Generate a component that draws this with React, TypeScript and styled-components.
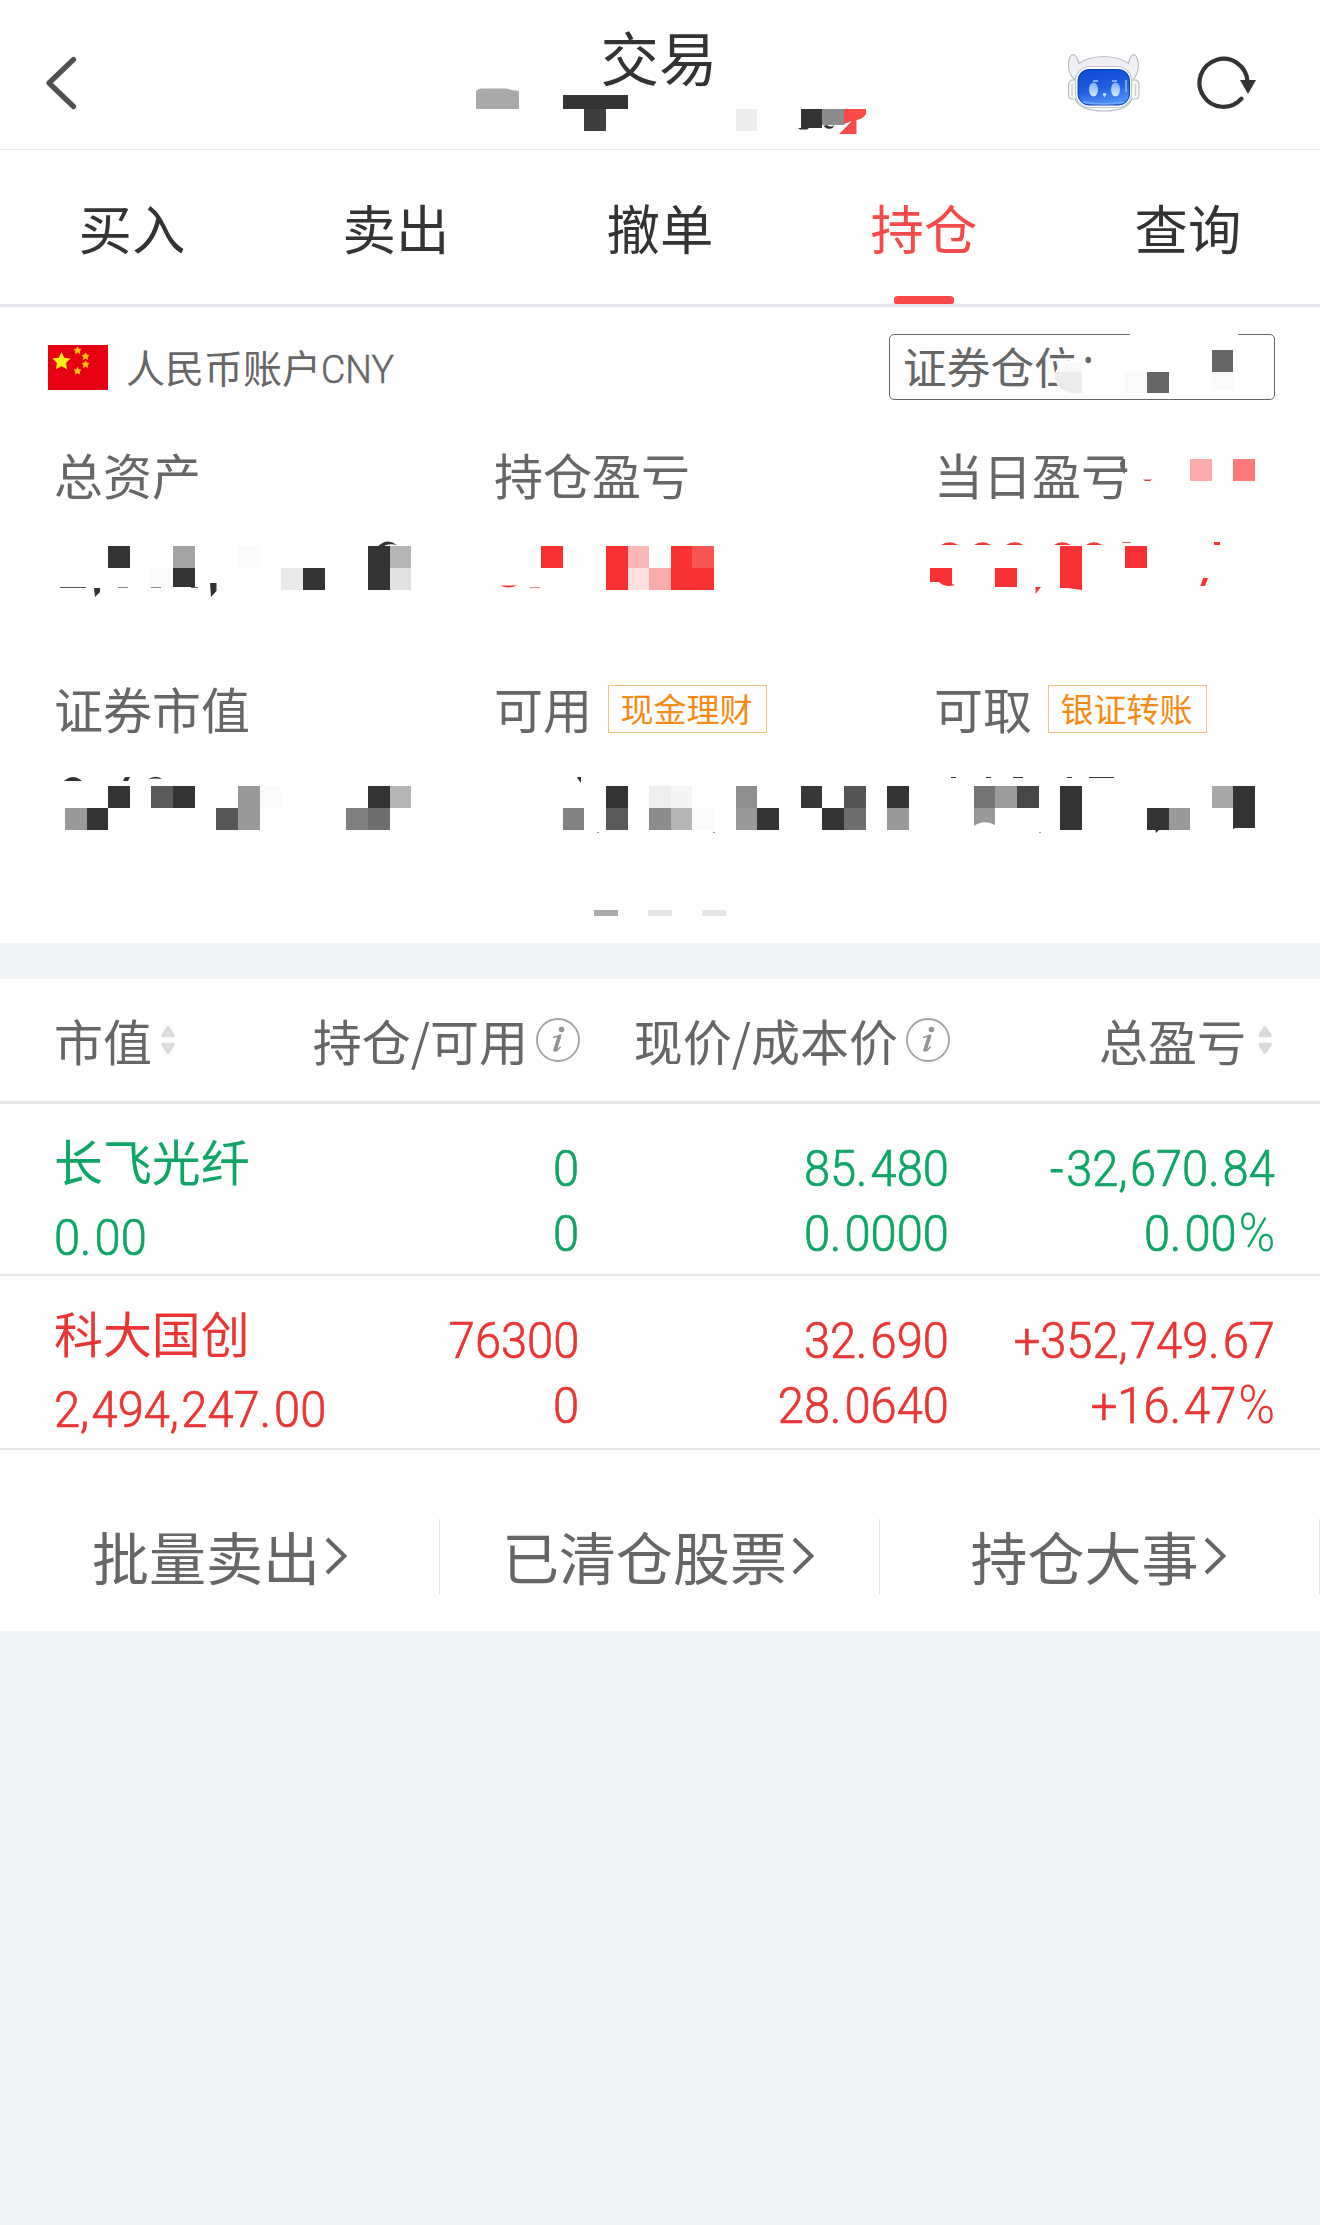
import React from "react";
import styled, { createGlobalStyle } from "styled-components";

const GlobalStyle = createGlobalStyle`
  * { box-sizing: border-box; }
  html, body { margin: 0; background: #f3f4f8; }
`;

const Page = styled.main`
  position: relative;
  width: 1320px;
  min-height: 2225px;
  background: #f3f4f8;
  color: #666;
  font-family: "Noto Sans CJK SC", sans-serif;
  white-space: nowrap;
  overflow: hidden;
`;

/* ---------- top bar ---------- */

const TopBar = styled.header`
  display: grid;
  grid-template-columns: 1fr auto 1fr;
  height: 150px;
  padding: 0 64px 0 45px;
  background: #fefefe;
  border-bottom: 1px solid #e7e7e9;
`;

const Title = styled.h1`
  margin: 0;
  padding: 16px 0 0 17px;
  font-size: 58.5px;
  line-height: 80px;
  font-weight: 400;
  color: #333;
`;

const BackIcon = styled.svg`
  margin-top: 56px;
`;

const Actions = styled.div`
  display: flex;
  justify-content: flex-end;
  align-items: flex-start;
  gap: 56px;
  padding-top: 53px;
`;

/* ---------- tabs ---------- */

const Tabs = styled.nav`
  display: grid;
  grid-template-columns: repeat(5, 1fr);
  height: 157px;
  background: #fefefe;
  border-bottom: 3px solid #e6e7ee;
`;

const Tab = styled.button<{ $active?: boolean }>`
  display: flex;
  flex-direction: column;
  align-items: center;
  justify-content: space-between;
  height: 154px;
  padding: 37px 0 0;
  border: 0;
  background: none;
  font: 400 53.4px/80px "Noto Sans CJK SC", sans-serif;
  color: ${(p) => (p.$active ? "#f64a48" : "#333")};
  &::after {
    content: "";
    width: 60px;
    height: 8px;
    border-radius: 4px 4px 2px 2px;
    background: ${(p) => (p.$active ? "#f84848" : "transparent")};
  }
`;

/* ---------- account summary ---------- */

const Summary = styled.section`
  display: flex;
  flex-direction: column;
  height: 636px;
  background: #fefefe;
`;

const AccountRow = styled.div`
  display: flex;
  justify-content: space-between;
  height: 121px;
  padding: 27px 45px 0 48px;
`;

const Account = styled.div`
  display: flex;
  gap: 18px;
  padding-top: 11px;
  font-size: 39px;
  line-height: 43px;
`;

const Currency = styled.span`
  display: inline-block;
  font-family: Roboto, sans-serif;
  font-size: 38px;
  font-weight: 300;
  -webkit-text-stroke: 0.5px currentColor;
  transform: scaleX(0.985);
  transform-origin: left;
`;

const Position = styled.div`
  width: 386px;
  height: 66px;
  padding-left: 13px;
  border: 1.4px solid #666;
  border-radius: 5px;
  font-size: 43.7px;
  line-height: 61px;
`;

const Metrics = styled.div`
  display: grid;
  grid-template-columns: repeat(3, 440px);
  grid-auto-rows: 234px;
  height: 469px;
`;

const Metric = styled.div`
  display: flex;
  align-items: center;
  gap: 16px;
  height: 80px;
  margin-top: 6px;
  padding-left: 54px;
  font-size: 49px;
  line-height: 80px;
`;

const Tag = styled.span`
  display: flex;
  align-items: center;
  justify-content: center;
  width: 159px;
  height: 48px;
  margin-top: 2px;
  border: 1.4px solid #ecc182;
  color: #f58a16;
  font-size: 33px;
  line-height: 44px;
  padding: 0 2px 2px 0;
`;

const Pager = styled.div`
  display: flex;
  justify-content: center;
  gap: 30px;
  margin-top: 13px;
`;

const Dash = styled.i<{ $on?: boolean }>`
  width: 24px;
  height: 6px;
  background: ${(p) => (p.$on ? "#ababab" : "#e5e5e5")};
`;

/* ---------- holdings ---------- */

const Holdings = styled.section`
  margin-top: 36px;
  background: #fefefe;
`;

const columns = "270px 256px 370px 1fr";

const HeadRow = styled.div`
  display: grid;
  grid-template-columns: ${columns};
  align-items: start;
  height: 125px;
  padding: 22px 48px 0 54px;
  border-bottom: 3px solid #e6e6eb;
  font-size: 49px;
  line-height: 78px;
`;

const HeadCell = styled.div<{ $end?: boolean; $gap: number }>`
  display: flex;
  align-items: center;
  justify-content: ${(p) => (p.$end ? "flex-end" : "flex-start")};
  gap: ${(p) => p.$gap}px;
  height: 78px;
  & > svg { flex: none; }
`;

const StockRow = styled.div<{ $color: string; $h: number }>`
  display: grid;
  grid-template-columns: ${columns};
  height: ${(p) => p.$h}px;
  padding: 0 46px 0 54px;
  border-bottom: 2px solid #e6e6eb;
  color: ${(p) => p.$color};
`;

const NameCell = styled.div`
  padding-top: 16px;
`;

const StockName = styled.div`
  font-size: 48.9px;
  line-height: 80px;
`;

const MarketValue = styled.div`
  height: 65px;
  margin-top: 5px;
`;

const NumCell = styled.div<{ $shift: number }>`
  display: flex;
  flex-direction: column;
  align-items: flex-end;
  padding-top: 32px;
  margin-right: ${(p) => p.$shift}px;
`;

const Figure = styled.span<{ $left?: boolean }>`
  display: inline-block;
  font: 300 50.6px/65px Roboto, sans-serif;
  -webkit-text-stroke: 0.7px currentColor;
  transform: scaleX(0.93);
  transform-origin: ${(p) => (p.$left ? "left" : "right")} center;
`;

const Glyph = styled.span<{ $extra: number; $light?: boolean }>`
  letter-spacing: ${(p) => p.$extra}px;
  font-size: ${(p) => (p.$light ? "1.06em" : "inherit")};
  -webkit-text-stroke: ${(p) => (p.$light ? 0 : 0.9)}px currentColor;
  line-height: 0;
  margin-left: ${(p) => (p.$light ? 2 : 0)}px;
`;

/* ---------- shortcuts ---------- */

const Shortcuts = styled.div`
  display: grid;
  grid-template-columns: repeat(3, 440px);
  height: 181px;
  padding-top: 69px;
`;

const Shortcut = styled.button<{ $nudge: number }>`
  display: flex;
  align-items: center;
  justify-content: center;
  gap: 5px;
  height: 75px;
  padding: 0 ${(p) => p.$nudge}px 2px 0;
  border: 0;
  border-right: 1px solid #e4e4e8;
  background: none;
  color: #666;
  font: 400 57px/73px "Noto Sans CJK SC", sans-serif;
`;

/* ---------- mosaic over private figures ---------- */

const Mosaic = styled.svg`
  position: absolute;
  left: 0;
  top: 0;
  pointer-events: none;
`;

const punctuation: Record<string, number> = { ".": 3.4, ",": 2.6, "-": 3 };

function Num({ value, left }: { value: string; left?: boolean }) {
  return (
    <Figure $left={left}>
      {value.split(/([.,\-%])/).filter(Boolean).map((part, i) =>
        part === "%" || part in punctuation ? (
          <Glyph key={i} $extra={punctuation[part] ?? 0} $light={part === "%"}>{part}</Glyph>
        ) : (
          part
        )
      )}
    </Figure>
  );
}

function Robot() {
  return (
    <svg width="74" height="60" viewBox="1066 53 74 60">
      <defs>
        <linearGradient id="shell" x1="0" y1="0" x2="0" y2="1">
          <stop offset="0" stopColor="#eceef2" />
          <stop offset="1" stopColor="#fafbfd" />
        </linearGradient>
        <linearGradient id="face" x1="0" y1="0" x2="0.3" y2="1">
          <stop offset="0" stopColor="#0b49cf" />
          <stop offset="0.6" stopColor="#1f5ce2" />
          <stop offset="1" stopColor="#4a8cf4" />
        </linearGradient>
        <linearGradient id="eye" x1="0" y1="0" x2="0" y2="1">
          <stop offset="0" stopColor="#7fb0f2" />
          <stop offset="1" stopColor="#d5e9fd" />
        </linearGradient>
      </defs>
      <path d="M1079 63.500Q1087 57 1104 56.500Q1120 57 1128.500 63.500Q1130 55 1134 54.500Q1138 56 1138.500 66Q1138 74 1133 80H1136Q1139 81 1139 86V94Q1139 99 1136 99H1132Q1127 111 1104 111Q1080 111 1075 99H1072Q1068.500 99 1068.500 94V86Q1068.500 80 1072 80H1075Q1068 74 1068.500 64Q1069 55 1073 54.500Q1077 55 1079 63.500Z" fill="url(#shell)" stroke="#b9bac0" strokeWidth="1.100" />
      <rect x="1075.500" y="66.500" width="56" height="41" rx="14" fill="#fff" stroke="#c3c9d8" strokeWidth="1.200" />
      <rect x="1078" y="69.500" width="51.500" height="35.500" rx="11" fill="url(#face)" stroke="#0a3cb4" strokeWidth="1" />
      <path d="M1083 102Q1104 106 1124 102" fill="none" stroke="#70aaf8" strokeWidth="1.500" />
      <ellipse cx="1093.500" cy="89.500" rx="4.500" ry="7" fill="url(#eye)" />
      <ellipse cx="1115.500" cy="89.500" rx="4.500" ry="7" fill="url(#eye)" />
      <path d="M1093 81L1098 81M1112 81L1117 81" stroke="#a8cbf8" strokeWidth="1.500" />
      <path d="M1102.500 94Q1104.500 92 1106.500 94L1104.500 97.500Z" fill="#bcd9fb" />
      <path d="M1126 80V92" stroke="#7fa8f0" strokeWidth="2" />
      <path d="M1072 84V96M1135.500 84V96" stroke="#dec4c4" strokeWidth="1.200" />
    </svg>
  );
}

function Refresh() {
  return (
    <svg width="60" height="60" viewBox="1196 53 60 60">
      <path d="M1241.500 98.700A24 24 0 1 1 1247.500 82" fill="none" stroke="#333" strokeWidth="4.200" strokeLinecap="round" />
      <path d="M1240 80H1256L1248 94Z" fill="#333" />
    </svg>
  );
}

const starPoints = (cx: number, cy: number, r: number) =>
  Array.from({ length: 10 }, (_, i) => {
    const a = (Math.PI / 5) * i - Math.PI / 2;
    const d = i % 2 ? r * 0.5 : r;
    return `${cx + Math.cos(a) * d},${cy + Math.sin(a) * d}`;
  }).join(" ");

function Flag() {
  return (
    <svg width="60" height="45" viewBox="0 0 60 45">
      <rect width="60" height="45" fill="#e60012" />
      <polygon points={starPoints(13.5, 16.5, 9.5)} fill="#ffee10" />
      {[[29.5, 5.5], [37.5, 11.5], [37.5, 19.5], [29.5, 26]].map(([x, y]) => (
        <polygon key={`${x}-${y}`} points={starPoints(x, y, 3.6)} fill="#fcc80c" stroke="#fcc80c" strokeWidth="0.8" />
      ))}
    </svg>
  );
}

function Sort() {
  return (
    <svg width="14" height="28" viewBox="0 0 14 28">
      <path d="M7 2L12 9.500H2ZM7 26L12 18.500H2Z" fill="#dadada" stroke="#dadada" strokeWidth="3.400" strokeLinejoin="round" />
    </svg>
  );
}

function Info() {
  return (
    <svg width="44" height="44" viewBox="0 0 44 44">
      <circle cx="22" cy="22" r="21" fill="none" stroke="#a3a3a3" strokeWidth="1.800" />
      <circle cx="25.500" cy="11.500" r="2.800" fill="#949494" />
      <path d="M17 19.500L24.500 17.500L20.200 31.500Q19.900 33 21.300 32.200L24.600 28.500" fill="none" stroke="#949494" strokeWidth="1.600" />
      <path d="M23.300 18.500L19 32" stroke="#949494" strokeWidth="3.600" strokeLinecap="round" />
    </svg>
  );
}

function Chevron() {
  return (
    <svg width="22" height="38" viewBox="0 0 22 38">
      <path d="M2 2L19.500 19L2 36" fill="none" stroke="#666" strokeWidth="4" />
    </svg>
  );
}

type Block = [number, number, number, number, string];

const D = "#333";
const R = "#f83232";

/* x1, y1, x2, y2, colour */
const blocks: Block[] = [
  [563, 95, 628, 109, D], [584, 109, 606, 131, "#3f3f3f"], [736, 109, 757, 131, "#ededed"],
  [801, 109, 822, 128, D], [822, 109, 844, 125, "#8c8c8c"],
  [1125, 372, 1147, 393, "#f9f9f9"], [1147, 372, 1169, 393, "#666"],
  [1212, 350, 1233, 372, "#666"], [1212, 372, 1233, 391, "#f9f9f9"],
  [108, 546, 130, 568, D], [173, 546, 195, 568, "#a3a3a3"], [151, 568, 173, 587, "#fafafa"],
  [173, 568, 195, 587, D], [238, 546, 260, 568, "#fafafa"], [281, 568, 303, 590, "#e9e9e9"],
  [303, 568, 325, 590, D], [368, 546, 390, 590, D], [390, 546, 411, 568, "#b5b5b5"],
  [390, 568, 411, 590, "#e1e1e1"],
  [60, 587, 86, 588, "#555"], [118, 587, 128, 588, "#888"], [151, 587, 161, 588, "#888"], [191, 587, 198, 588, "#666"],
  [541, 546, 563, 568, R], [606, 546, 628, 590, R], [628, 546, 649, 568, "#fcb6b6"],
  [628, 568, 649, 590, "#fde0e0"], [649, 568, 671, 590, "#fcabab"], [671, 546, 692, 590, R],
  [692, 546, 714, 568, "#fa5555"], [692, 568, 714, 590, R], [530, 587, 540, 588, "#d88"],
  [1190, 459, 1212, 481, "#fcabab"], [1233, 459, 1255, 481, "#fa7a7a"],
  [995, 568, 1017, 587, R], [1060, 546, 1082, 588, R], [1125, 546, 1147, 568, R],
  [1214, 542, 1220, 545, R], [1122, 542, 1131, 543, "#d66"],
  [108, 786, 130, 808, D], [65, 808, 87, 830, "#999"], [87, 808, 108, 830, D],
  [151, 786, 173, 808, "#595959"], [173, 786, 195, 808, D], [238, 786, 260, 830, "#999"],
  [260, 786, 281, 808, "#fafafa"], [216, 808, 238, 830, "#575757"], [368, 786, 390, 808, D],
  [390, 786, 411, 808, "#b5b5b5"], [346, 808, 368, 830, "#808080"], [368, 808, 390, 830, "#6e6e6e"],
  [563, 808, 584, 830, "#828282"], [606, 786, 628, 808, D], [606, 808, 628, 830, "#595959"],
  [649, 786, 671, 808, "#eeeeee"], [671, 786, 692, 808, "#f5f5f5"], [649, 808, 671, 830, "#8c8c8c"],
  [671, 808, 692, 830, "#b5b5b5"], [692, 808, 714, 830, "#fafafa"], [736, 786, 757, 808, "#8f8f8f"],
  [736, 808, 757, 830, "#999"], [757, 808, 779, 830, D], [801, 786, 822, 808, "#373737"],
  [822, 808, 844, 830, D], [844, 786, 866, 808, "#555"], [844, 808, 866, 830, "#6e6e6e"],
  [597, 832, 599, 833, "#999"], [713, 832, 715, 833, "#999"],
  [887, 786, 909, 808, D], [887, 808, 909, 830, "#999"], [974, 786, 995, 808, "#737373"],
  [995, 786, 1017, 808, "#9c9c9c"], [1017, 786, 1039, 808, "#474747"], [1060, 786, 1082, 830, D],
  [1147, 808, 1169, 830, D], [1169, 808, 1190, 830, "#999"], [1212, 786, 1233, 808, "#a8a8a8"],
  [1233, 786, 1255, 828, D], [1039, 832, 1041, 833, "#999"],
  [951, 777, 956, 778, D], [986, 777, 991, 778, D], [1013, 777, 1023, 778, D],
  [1067, 777, 1072, 778, D], [1089, 777, 1114, 778, D],
];

/* leftover curved slivers: path, colour */
const slivers: [string, string][] = [
  ["M476 109V91Q478 88 482 88.500H503Q508 88 511 90L519 91V109Z", "#a9a9a9"],
  ["M844 109H866V114Q863 119 856.500 120V134H839L852 121L844 124Z", "#f84a48"],
  ["M798 128H809L807 129.500H800ZM823 126L827 128.500Q833 130 834 125Q831 128 827 125Z", D],
  ["M1130 333H1238V336H1130Z", "#fefefe"],
  ["M1082 361H1100V393H1066Q1056 390 1055 376Q1055 366 1066 361Z", "#fefefe"],
  ["M1082 363V372H1056Q1060 364 1067 363Z", "#f9f9f9"],
  ["M1082 372V393H1072Q1056 390 1055 376V372Z", "#ececec"],
  ["M1085.500 360A2.800 2.800 0 1 1 1091 360A2.800 2.800 0 1 1 1085.500 360Z", "#666"],
  ["M1120 463L1122 459H1125V474Q1120 471 1120 463Z", "#666"],
  ["M377 547Q387 537 397 545Q387 543 383 547Z", D],
  ["M94 588H100V592L95 597ZM210 583H216.500V591L211 597Z", D],
  ["M500 585.500H517Q509 589.500 500 585.500Z", R],
  ["M1143 479.500H1152L1150 481H1145Z", "#c44"],
  ["M941 545Q949.500 539.500 958 545ZM974 545Q982.500 539.500 991 545ZM1006 545Q1014.500 539.500 1023 545ZM1054 545Q1062 539.500 1071 545ZM1086 545Q1094 539.500 1102 545Z", R],
  ["M930 568H952V584L955 585Q945 588 939 582H930ZM1060 587L1082 587V590ZM1035.500 587H1041L1035.500 594ZM1203 578H1208L1205 586H1200.500Z", R],
  ["M64 781Q73 773 82 781ZM125 777H130L128 781H123ZM148 779.500Q155 774.500 162 779Q154 778 148 779.500Z", D],
  ["M577 777H581V783L578 779Z", D],
  ["M974 808H995V825Q984 819 974 826Z", "#999"],
  ["M1155 829H1160L1156 833ZM1233 827H1238L1233 829Z", D],
];

const stocks = [
  { name: "长飞光纤", value: "0.00", qty: ["0", "0"], price: ["85.480", "0.0000"], pl: ["-32,670.84", "0.00%"], color: "#0ea567", h: 172 },
  { name: "科大国创", value: "2,494,247.00", qty: ["76300", "0"], price: ["32.690", "28.0640"], pl: ["+352,749.67", "+16.47%"], color: "#ea3535", h: 174 },
];

export default function App() {
  return (
    <Page>
      <GlobalStyle />
      <TopBar>
        <BackIcon width="32" height="54" viewBox="0 0 32 54">
          <path d="M28.500 3.500L4 27L28.500 50.500" fill="none" stroke="#505050" strokeWidth="5.200" strokeLinecap="round" strokeLinejoin="round" />
        </BackIcon>
        <Title>交易</Title>
        <Actions>
          <Robot />
          <Refresh />
        </Actions>
      </TopBar>

      <Tabs>
        {["买入", "卖出", "撤单", "持仓", "查询"].map((t) => (
          <Tab key={t} $active={t === "持仓"}>{t}</Tab>
        ))}
      </Tabs>

      <Summary>
        <AccountRow>
          <Account>
            <Flag />
            <span>人民币账户<Currency>CNY</Currency></span>
          </Account>
          <Position>证券仓位</Position>
        </AccountRow>
        <Metrics>
          <Metric>总资产</Metric>
          <Metric>持仓盈亏</Metric>
          <Metric>当日盈亏</Metric>
          <Metric>证券市值</Metric>
          <Metric>可用<Tag>现金理财</Tag></Metric>
          <Metric>可取<Tag>银证转账</Tag></Metric>
        </Metrics>
        <Pager>
          <Dash $on />
          <Dash />
          <Dash />
        </Pager>
      </Summary>

      <Holdings>
        <HeadRow>
          <HeadCell $gap={9}>市值<Sort /></HeadCell>
          <HeadCell $gap={8} $end>持仓/可用<Info /></HeadCell>
          <HeadCell $gap={8} $end>现价/成本价<Info /></HeadCell>
          <HeadCell $gap={12} $end>总盈亏<Sort /></HeadCell>
        </HeadRow>
        {stocks.map((s) => (
          <StockRow key={s.name} $color={s.color} $h={s.h}>
            <NameCell>
              <StockName>{s.name}</StockName>
              <MarketValue><Num value={s.value} left /></MarketValue>
            </NameCell>
            {[s.qty, s.price, s.pl].map((pair, i) => (
              <NumCell key={i} $shift={i === 2 ? -1 : 1}>
                {pair.map((v, j) => <Num key={j} value={v} />)}
              </NumCell>
            ))}
          </StockRow>
        ))}
        <Shortcuts>
          {["批量卖出", "已清仓股票", "持仓大事"].map((t, i) => (
            <Shortcut key={t} $nudge={i ? 3 : 0}>{t}<Chevron /></Shortcut>
          ))}
        </Shortcuts>
      </Holdings>

      <Mosaic width="1320" height="900" viewBox="0 0 1320 900">
        {slivers.map(([d, fill]) => <path key={d} d={d} fill={fill} />)}
        {blocks.map(([x1, y1, x2, y2, fill]) => (
          <rect key={`${x1}-${y1}`} x={x1} y={y1} width={x2 - x1} height={y2 - y1} fill={fill} shapeRendering="crispEdges" />
        ))}
      </Mosaic>
    </Page>
  );
}
